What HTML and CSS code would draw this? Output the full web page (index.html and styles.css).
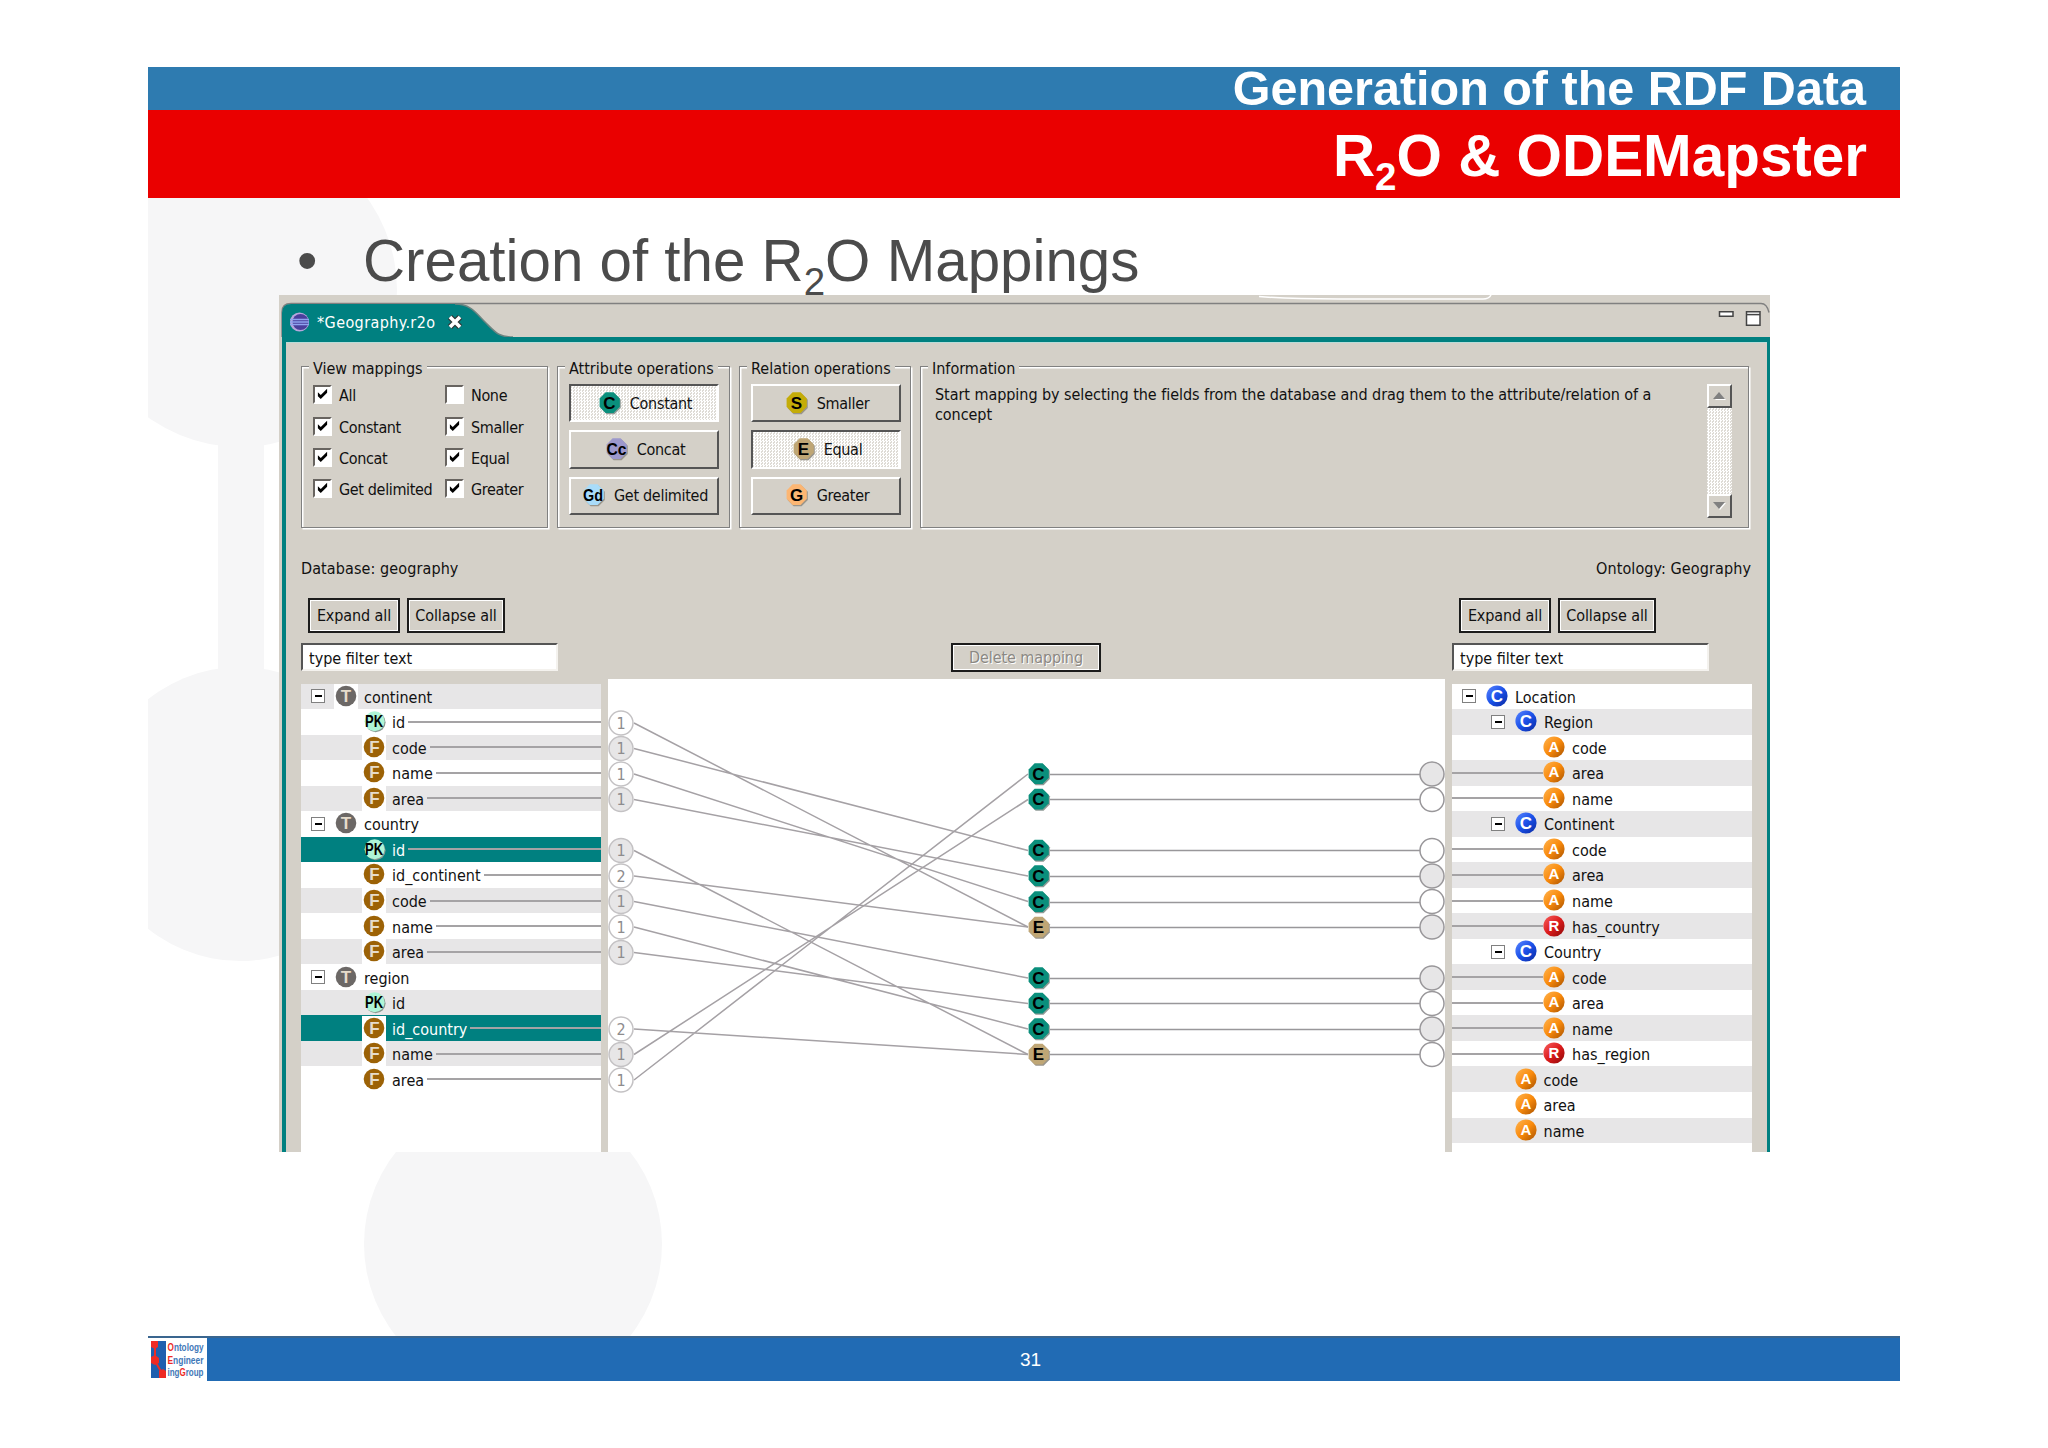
FILE: index.html
```
<!DOCTYPE html>
<html lang="en">
<head>
    <meta charset="UTF-8">
    <meta name="viewport" content="width=device-width, initial-scale=1.0">
    <title>R2O &amp; ODEMapster</title>
    <link rel="stylesheet" href="styles.css">
</head>
<body>
    <!-- icon definitions -->
    <svg class="defs" width="0" height="0">
        <defs>
            <linearGradient id="gBlue" x1="0" y1="0" x2="1" y2="1"><stop offset="0" stop-color="#5b86ff"/><stop offset=".5" stop-color="#1a50e8"/><stop offset="1" stop-color="#0a2aa0"/></linearGradient>
            <linearGradient id="gOrange" x1="0" y1="0" x2="1" y2="1"><stop offset="0" stop-color="#ffb450"/><stop offset=".5" stop-color="#f98a0c"/><stop offset="1" stop-color="#a85200"/></linearGradient>
            <linearGradient id="gRed" x1="0" y1="0" x2="1" y2="1"><stop offset="0" stop-color="#f86060"/><stop offset=".5" stop-color="#dc1c1c"/><stop offset="1" stop-color="#8c0808"/></linearGradient>
            <symbol id="table" viewBox="0 0 24 25"><circle cx="12" cy="12" r="10.3" fill="#6c6866"/><text class="glyph light" x="12" y="18">T</text></symbol>
            <symbol id="field" viewBox="0 0 24 25"><circle cx="12" cy="12" r="10.3" fill="#9c6206"/><text class="glyph light" x="12.5" y="18">F</text></symbol>
            <symbol id="pk" viewBox="0 0 24 25"><circle cx="13.6" cy="13.3" r="10" fill="#8a9a92"/><circle cx="12.6" cy="12.3" r="10" fill="#aff5d6"/><text class="glyph pk" x="12" y="18" textLength="18" lengthAdjust="spacingAndGlyphs">PK</text></symbol>
            <symbol id="concept" viewBox="0 0 24 25"><circle cx="12" cy="12" r="10.6" fill="url(#gBlue)"/><text class="glyph white" x="12" y="18">C</text></symbol>
            <symbol id="attr" viewBox="0 0 24 25"><circle cx="12" cy="12" r="10.6" fill="url(#gOrange)"/><text class="glyph white small" x="12" y="17">A</text></symbol>
            <symbol id="rel" viewBox="0 0 24 25"><circle cx="12" cy="12" r="10.6" fill="url(#gRed)"/><text class="glyph white small" x="12" y="17">R</text></symbol>
            <path id="oct" d="M7.6 1.2h8l6.2 6.2v8.4l-6.2 6.2h-8L1.6 15.8V7.4z"/>
            <symbol id="opC" viewBox="0 0 24 25"><use href="#oct" x="1" y="1.3" fill="#8f9a96"/><use href="#oct" fill="#0a8f7c"/><text class="glyph" x="11.5" y="17.5">C</text></symbol>
            <symbol id="opE" viewBox="0 0 24 25"><use href="#oct" x="1" y="1.3" fill="#99958c"/><use href="#oct" fill="#bfa675"/><text class="glyph" x="11.5" y="17.5">E</text></symbol>
            <symbol id="opS" viewBox="0 0 24 25"><use href="#oct" x="1" y="1.3" fill="#99958c"/><use href="#oct" fill="#c4ac08"/><text class="glyph" x="11.5" y="17.5">S</text></symbol>
            <symbol id="opG" viewBox="0 0 24 25"><use href="#oct" x="1" y="1.3" fill="#99958c"/><use href="#oct" fill="#fcb673"/><text class="glyph" x="11.5" y="17.5">G</text></symbol>
            <symbol id="opCc" viewBox="0 0 24 25"><use href="#oct" x="1" y="1.3" fill="#99958c"/><use href="#oct" fill="#9c98cc"/><text class="glyph" x="11.5" y="17.5" textLength="20" lengthAdjust="spacingAndGlyphs">Cc</text></symbol>
            <symbol id="opGd" viewBox="0 0 24 25"><use href="#oct" x="1" y="1.3" fill="#99958c"/><use href="#oct" fill="#a9dcfa"/><text class="glyph" x="11" y="17.5" textLength="20" lengthAdjust="spacingAndGlyphs">Gd</text></symbol>
            <symbol id="check" viewBox="0 0 13 13"><path d="M2.500 4.500v3.500l2.500 2.500 5.500-5.500V1.500L5 7z" fill="#000"/></symbol>
        </defs>
    </svg>

    <div class="slide">
        <svg class="backdrop" width="1752" height="1138" viewBox="0 0 1752 1138">
            <g fill="#f6f6f7">
                <circle cx="92" cy="92" r="157"/>
                <rect x="70" y="245" width="46" height="235"/>
                <circle cx="92" cy="616" r="147"/>
                <circle cx="365" cy="1046" r="149"/>
            </g>
        </svg>

        <header class="topbar"><h2>Generation of the RDF Data</h2></header>
        <header class="titlebar"><h1>R<span class="sub">2</span>O &amp; ODEMapster</h1></header>
        <div class="bullet"><span class="dot">•</span><p>Creation of the R<span class="sub">2</span>O Mappings</p></div>

        <main class="window">
            <div class="tabbar">
                <svg class="tabshape" width="1491" height="42" viewBox="0 0 1491 42">
                    <path d="M980 1.500Q1010 4 1060 4H1204q6 0 8-4" fill="none" stroke="#fff" stroke-width="1.5"/>
                    <path d="M3 42V17Q3 8.500 12 8.500H1482q6 0 8 9" fill="none" stroke="#808080" stroke-width="1.4"/>
                    <path d="M3 42V18Q3 9 12 9H176C192 9 197 18 207 28S220 42 234 42z" fill="#008080"/>
                    <path d="M176 9C192 9 197 18 207 28S220 42 234 42" fill="none" stroke="#6c8480" stroke-width="1.5"/>
                </svg>
                <div class="tab">
                    <svg width="21" height="20" viewBox="0 0 21 20"><circle cx="10.5" cy="10" r="9.5" fill="#b7a6de"/><circle cx="11.5" cy="10" r="8" fill="#4a3f9c"/><path d="M1 7.500h19M1 10h19M1 12.500h19" stroke="#8fa4f0" stroke-width="1.3"/></svg>
                    <span class="tabname">*Geography.r2o</span>
                    <svg width="16" height="18" viewBox="0 0 16 18"><path d="M3 4l10 10M13 4L3 14" stroke="#333" stroke-width="6"/><path d="M3 4l10 10M13 4L3 14" stroke="#fff" stroke-width="3.6"/></svg>
                </div>
                <svg class="winbtns" width="44" height="18" viewBox="0 0 44 18"><g fill="#fff" stroke="#444" stroke-width="1.5"><path d="M1.500 1.800h13.500v4.400H1.500zM28.500 1.800h13.500v13.400H28.500z"/><path d="M28.500 4.600h13.500"/></g></svg>
            </div>

            <div class="editor">
                <div class="groups">
                    <section class="group view">
                        <div class="group-title">View mappings</div>
                        <div class="checks">
                            <label><i class="box"><svg><use href="#check"/></svg></i><span>All</span></label>
                            <label><i class="box"></i><span>None</span></label>
                            <label><i class="box"><svg><use href="#check"/></svg></i><span>Constant</span></label>
                            <label><i class="box"><svg><use href="#check"/></svg></i><span>Smaller</span></label>
                            <label><i class="box"><svg><use href="#check"/></svg></i><span>Concat</span></label>
                            <label><i class="box"><svg><use href="#check"/></svg></i><span>Equal</span></label>
                            <label><i class="box"><svg><use href="#check"/></svg></i><span>Get delimited</span></label>
                            <label><i class="box"><svg><use href="#check"/></svg></i><span>Greater</span></label>
                        </div>
                    </section>
                    <section class="group attribute">
                        <div class="group-title">Attribute operations</div>
                        <div class="ops">
                            <button class="op pressed"><svg class="icon"><use href="#opC"/></svg>Constant</button>
                            <button class="op"><svg class="icon"><use href="#opCc"/></svg>Concat</button>
                            <button class="op"><svg class="icon"><use href="#opGd"/></svg>Get delimited</button>
                        </div>
                    </section>
                    <section class="group relation">
                        <div class="group-title">Relation operations</div>
                        <div class="ops">
                            <button class="op"><svg class="icon"><use href="#opS"/></svg>Smaller</button>
                            <button class="op pressed"><svg class="icon"><use href="#opE"/></svg>Equal</button>
                            <button class="op"><svg class="icon"><use href="#opG"/></svg>Greater</button>
                        </div>
                    </section>
                    <section class="group info">
                        <div class="group-title">Information</div>
                        <div class="info-body">
                            <p>Start mapping by selecting the fields from the database and drag them to the attribute/relation of a<br>concept</p>
                            <div class="scrollbar">
                                <span class="arrow"><svg width="13" height="8" viewBox="0 0 13 8"><path d="M2 8h11L7.500 2z" fill="#fff"/><path d="M0 7h12L6 0z" fill="#808080"/></svg></span>
                                <span class="arrow"><svg width="13" height="8" viewBox="0 0 13 8"><path d="M1 1h12L7 8z" fill="#fff"/><path d="M0 0h12L6 7z" fill="#808080"/></svg></span>
                            </div>
                        </div>
                    </section>
                </div>

                <div class="sources"><span>Database: geography</span><span>Ontology: Geography</span></div>

                <div class="panes">
                    <div class="pane">
                        <div class="tools"><button class="flat expand">Expand all</button><button class="flat collapse">Collapse all</button></div>
                        <input class="filter" type="text" value="type filter text">
                        <ul class="tree db">
                            <li><i class="toggle"></i><svg class="icon pad"><use href="#table"/></svg><span>continent</span></li>
                            <li class="child"><svg class="icon"><use href="#pk"/></svg><span>id</span><i class="wire"></i></li>
                            <li class="child"><svg class="icon pad"><use href="#field"/></svg><span>code</span><i class="wire"></i></li>
                            <li class="child"><svg class="icon pad"><use href="#field"/></svg><span>name</span><i class="wire"></i></li>
                            <li class="child"><svg class="icon pad"><use href="#field"/></svg><span>area</span><i class="wire"></i></li>
                            <li><i class="toggle"></i><svg class="icon pad"><use href="#table"/></svg><span>country</span></li>
                            <li class="child selected"><svg class="icon"><use href="#pk"/></svg><span>id</span><i class="wire"></i></li>
                            <li class="child"><svg class="icon pad"><use href="#field"/></svg><span>id_continent</span><i class="wire"></i></li>
                            <li class="child"><svg class="icon pad"><use href="#field"/></svg><span>code</span><i class="wire"></i></li>
                            <li class="child"><svg class="icon pad"><use href="#field"/></svg><span>name</span><i class="wire"></i></li>
                            <li class="child"><svg class="icon pad"><use href="#field"/></svg><span>area</span><i class="wire"></i></li>
                            <li><i class="toggle"></i><svg class="icon pad"><use href="#table"/></svg><span>region</span></li>
                            <li class="child"><svg class="icon"><use href="#pk"/></svg><span>id</span></li>
                            <li class="child selected"><svg class="icon pad"><use href="#field"/></svg><span>id_country</span><i class="wire"></i></li>
                            <li class="child"><svg class="icon pad"><use href="#field"/></svg><span>name</span><i class="wire"></i></li>
                            <li class="child"><svg class="icon pad"><use href="#field"/></svg><span>area</span><i class="wire"></i></li>
                        </ul>
                    </div>

                    <div class="mapping">
                        <button class="flat delete" disabled>Delete mapping</button>
                        <svg class="canvas" width="837" height="473" viewBox="0 0 837 473">
                            <!-- database fields to operations -->
                            <g class="links">
                                <path d="M26 44L420 248M26 69.500L420 171.500M26 95L420 222.500M26 120.500L420 197"/>
                                <path d="M26 171.500L420 375.500M26 197L420 248M26 222.500L420 299M26 248L420 350M26 273.500L420 324.500"/>
                                <path d="M26 350L420 375.500M26 375.500L420 120.500M26 401L420 95"/>
                            </g>
                            <!-- operations to ontology -->
                            <g class="links strong">
                                <path d="M442 95.500H812M442 120.500H812M442 171.500H812M442 197.500H812M442 223.500H812M442 248.500H812M442 299.500H812M442 324.500H812M442 350.500H812M442 375.500H812"/>
                            </g>
                            <g class="port">
                                <circle cx="13" cy="44" r="12"/><circle class="odd" cx="13" cy="69.5" r="12"/><circle cx="13" cy="95" r="12"/><circle class="odd" cx="13" cy="120.5" r="12"/>
                                <circle class="odd" cx="13" cy="171.5" r="12"/><circle cx="13" cy="197" r="12"/><circle class="odd" cx="13" cy="222.5" r="12"/><circle cx="13" cy="248" r="12"/><circle class="odd" cx="13" cy="273.5" r="12"/>
                                <circle cx="13" cy="350" r="12"/><circle class="odd" cx="13" cy="375.5" r="12"/><circle cx="13" cy="401" r="12"/>
                            </g>
                            <g class="count">
                                <text x="13" y="49.5">1</text><text x="13" y="75">1</text><text x="13" y="100.5">1</text><text x="13" y="126">1</text>
                                <text x="13" y="177">1</text><text x="13" y="202.5">2</text><text x="13" y="228">1</text><text x="13" y="253.5">1</text><text x="13" y="279">1</text>
                                <text x="13" y="355.5">2</text><text x="13" y="381">1</text><text x="13" y="406.5">1</text>
                            </g>
                            <g class="port end">
                                <circle class="odd" cx="824" cy="95" r="12"/><circle cx="824" cy="120.5" r="12"/>
                                <circle cx="824" cy="171.5" r="12"/><circle class="odd" cx="824" cy="197" r="12"/><circle cx="824" cy="222.5" r="12"/><circle class="odd" cx="824" cy="248" r="12"/>
                                <circle class="odd" cx="824" cy="299" r="12"/><circle cx="824" cy="324.5" r="12"/><circle class="odd" cx="824" cy="350" r="12"/><circle cx="824" cy="375.5" r="12"/>
                            </g>
                            <use href="#opC" x="419" y="83" width="24" height="25"/>
                            <use href="#opC" x="419" y="108.5" width="24" height="25"/>
                            <use href="#opC" x="419" y="159.5" width="24" height="25"/>
                            <use href="#opC" x="419" y="185" width="24" height="25"/>
                            <use href="#opC" x="419" y="211" width="24" height="25"/>
                            <use href="#opE" x="419" y="236.5" width="24" height="25"/>
                            <use href="#opC" x="419" y="287" width="24" height="25"/>
                            <use href="#opC" x="419" y="312.5" width="24" height="25"/>
                            <use href="#opC" x="419" y="338" width="24" height="25"/>
                            <use href="#opE" x="419" y="363.5" width="24" height="25"/>
                        </svg>
                    </div>

                    <div class="pane">
                        <div class="tools"><button class="flat expand">Expand all</button><button class="flat collapse">Collapse all</button></div>
                        <input class="filter" type="text" value="type filter text">
                        <ul class="tree onto">
                            <li><i class="toggle"></i><svg class="icon"><use href="#concept"/></svg><span>Location</span></li>
                            <li class="sub1"><i class="toggle"></i><svg class="icon"><use href="#concept"/></svg><span>Region</span></li>
                            <li class="leaf"><svg class="icon"><use href="#attr"/></svg><span>code</span></li>
                            <li class="wired"><i class="wire"></i><svg class="icon"><use href="#attr"/></svg><span>area</span></li>
                            <li class="wired"><i class="wire"></i><svg class="icon"><use href="#attr"/></svg><span>name</span></li>
                            <li class="sub1"><i class="toggle"></i><svg class="icon"><use href="#concept"/></svg><span>Continent</span></li>
                            <li class="wired"><i class="wire"></i><svg class="icon"><use href="#attr"/></svg><span>code</span></li>
                            <li class="wired"><i class="wire"></i><svg class="icon"><use href="#attr"/></svg><span>area</span></li>
                            <li class="wired"><i class="wire"></i><svg class="icon"><use href="#attr"/></svg><span>name</span></li>
                            <li class="wired"><i class="wire"></i><svg class="icon"><use href="#rel"/></svg><span>has_country</span></li>
                            <li class="sub1"><i class="toggle"></i><svg class="icon"><use href="#concept"/></svg><span>Country</span></li>
                            <li class="wired"><i class="wire"></i><svg class="icon"><use href="#attr"/></svg><span>code</span></li>
                            <li class="wired"><i class="wire"></i><svg class="icon"><use href="#attr"/></svg><span>area</span></li>
                            <li class="wired"><i class="wire"></i><svg class="icon"><use href="#attr"/></svg><span>name</span></li>
                            <li class="wired"><i class="wire"></i><svg class="icon"><use href="#rel"/></svg><span>has_region</span></li>
                            <li class="leaf1"><svg class="icon"><use href="#attr"/></svg><span>code</span></li>
                            <li class="leaf1"><svg class="icon"><use href="#attr"/></svg><span>area</span></li>
                            <li class="leaf1"><svg class="icon"><use href="#attr"/></svg><span>name</span></li>
                        </ul>
                    </div>
                </div>
            </div>
        </main>

        <footer class="footer">
            <svg class="logo" width="59" height="43" viewBox="0 0 59 43">
                <rect width="59" height="43" fill="#fff"/>
                <rect x="3" y="3" width="15" height="37" fill="#1f5fae"/>
                <path d="M7 7v16l8 14" fill="none" stroke="#ee2a24" stroke-width="2"/>
                <path d="M3 3h7v6l-3 2-4-2zM3 19l4-2 4 3v5l-4 2-4-2zM11 33l4-2 3 2v7h-7z" fill="#ee2a24"/>
                <g class="logotext">
                    <text x="19.5" y="13" textLength="36" lengthAdjust="spacingAndGlyphs"><tspan class="r">O</tspan>ntology</text>
                    <text x="19.5" y="25.5" textLength="36" lengthAdjust="spacingAndGlyphs"><tspan class="r">E</tspan>ngineer</text>
                    <text x="19.5" y="38" textLength="36" lengthAdjust="spacingAndGlyphs">ing<tspan class="r">G</tspan>roup</text>
                </g>
            </svg>
            <span class="page">31</span>
        </footer>
    </div>
</body>
</html>
```
FILE: styles.css
```
* {
  box-sizing: border-box;
}

body {
  margin: 0;
  background: #fff;
  font-family: "Liberation Sans", Arial, sans-serif;
}

h1, h2, p, ul {
  margin: 0;
  padding: 0;
}

.defs {
  position: absolute;
}

.slide {
  position: relative;
  display: flex;
  flex-direction: column;
  width: 1752px;
  height: 1314px;
  margin: 67px 0 0 148px;
}

/* pale circles behind everything */
.backdrop {
  position: absolute;
  left: 0;
  top: 131px;
  z-index: -1;
}

.topbar {
  height: 43px;
  padding-right: 34px;
  background: #2e7bb0;
  color: #fff;
  text-align: right;
}

.topbar h2 {
  font-size: 48.5px;
  line-height: 43px;
  white-space: nowrap;
}

.titlebar {
  height: 88px;
  padding-right: 33px;
  background: #ea0000;
  color: #fff;
  text-align: right;
}

.titlebar h1 {
  font-size: 58.4px;
  line-height: 92px;
  white-space: nowrap;
}

.sub {
  font-size: 66%;
  position: relative;
  top: 14px;
  line-height: 1px;
}

.bullet {
  display: flex;
  height: 97px;
  color: #4b4b4b;
  font-size: 58.3px;
  line-height: 125px;
  white-space: nowrap;
}

.dot {
  width: 66px;
  margin-left: 149px;
}

/* application window */
.window {
  display: flex;
  flex-direction: column;
  width: 1491px;
  height: 857px;
  margin-left: 131px;
  background: #d4d0c8;
  font-family: "DejaVu Sans Condensed", "DejaVu Sans", sans-serif;
  font-stretch: condensed;
  font-size: 16px;
  color: #111;
}

.tabbar {
  position: relative;
  display: flex;
  justify-content: space-between;
  height: 42px;
  padding: 15px 8px 0 10px;
}

.tabshape {
  position: absolute;
  left: 0;
  top: 0;
}

.tab {
  position: relative;
  display: flex;
  align-items: center;
  height: 24px;
  color: #fff;
}

.tabname {
  margin: 0 12px 0 7px;
  padding-top: 1px;
  letter-spacing: .4px;
}

.winbtns {
  position: relative;
}

.editor {
  display: flex;
  flex-direction: column;
  height: 815px;
  margin-left: 3px;
  padding: 24px 15px 0 15px;
  border: solid #008080;
  border-width: 5px 3px 0 4px;
  box-shadow: inset 0 1px 0 #b9dcd8;
}

.groups {
  display: flex;
  gap: 9px;
}

.group {
  display: flex;
  flex-direction: column;
  height: 162px;
  border: 1px solid #808080;
  box-shadow: 1.5px 1.5px 0 #fff, inset 1.5px 1.5px 0 #fff;
}

.view { width: 247px; }
.attribute { width: 173px; }
.relation { width: 172px; }
.info { width: 829px; }

.group-title {
  align-self: flex-start;
  margin: -8px 0 0 7px;
  padding: 0 4px;
  line-height: 20px;
  background: #d4d0c8;
  white-space: nowrap;
}

.checks {
  display: grid;
  grid-template-columns: 132px 110px;
  grid-auto-rows: 31.4px;
  margin: 0 0 0 11px;
}

.checks label {
  display: flex;
  align-items: center;
  gap: 7px;
  white-space: nowrap;
  letter-spacing: -.35px;
}

.checks span {
  padding-top: 2px;
}

.box {
  width: 19px;
  height: 19px;
  border: 2px solid;
  border-color: #686460 #fff #fff #686460;
  background: #fff;
}

.box svg {
  display: block;
  width: 15px;
  height: 15px;
}

.ops {
  display: flex;
  flex-direction: column;
  gap: 8px;
  margin: 5px 0 0 11px;
}

button, input {
  font: inherit;
  color: inherit;
  border-radius: 0;
}

.op {
  display: flex;
  align-items: center;
  justify-content: center;
  gap: 8px;
  width: 150px;
  height: 38.4px;
  padding: 0 0 0 2px;
  border: 2px solid;
  border-color: #fff #555 #555 #fff;
  background: #d4d0c8;
  white-space: nowrap;
  letter-spacing: -.3px;
}

.pressed {
  border-color: #555 #fff #fff #555;
  background: repeating-conic-gradient(#fff 0 25%, #dedbd5 0 50%) 0 0 / 3px 3px;
}

.icon {
  flex: none;
  width: 24px;
  height: 25px;
}

.glyph {
  font-family: "Liberation Sans", Arial, sans-serif;
  font-size: 17px;
  font-weight: bold;
  font-stretch: normal;
  letter-spacing: 0;
  text-anchor: middle;
}

.glyph.light { fill: #e6dccb; }
.glyph.white { fill: #fff; }
.glyph.small { font-size: 15px; }

.info-body {
  display: flex;
  justify-content: space-between;
  padding: 5px 16px 0 14px;
}

.info-body p {
  padding-top: 1px;
  line-height: 19.5px;
  letter-spacing: -.05px;
  white-space: nowrap;
}

.scrollbar {
  display: flex;
  flex-direction: column;
  justify-content: space-between;
  width: 25px;
  height: 134px;
  background: repeating-conic-gradient(#fff 0 25%, #dedbd5 0 50%) 0 0 / 3px 3px;
}

.arrow {
  display: flex;
  align-items: center;
  justify-content: center;
  height: 24px;
  border: 2px solid;
  border-color: #fff #555 #555 #fff;
  background: #d4d0c8;
}

.sources {
  display: flex;
  justify-content: space-between;
  margin: 26px 0 14px;
  padding: 0 1px 0 0;
  line-height: 30px;
  letter-spacing: .1px;
}

.panes {
  display: grid;
  grid-template-columns: 300px 837px 300px;
  column-gap: 7px;
  flex: 1;
}

.pane {
  display: flex;
  flex-direction: column;
}

.tools {
  display: flex;
  gap: 7px;
  padding-left: 7px;
}

.flat {
  height: 35px;
  padding: 0;
  border: 2px solid #1c1c1c;
  background: #d4d0c8;
  box-shadow: inset 1px 1px 0 #fff, inset -1px -1px 0 #fff;
  white-space: nowrap;
  letter-spacing: -.1px;
}

.expand { width: 92px; }
.collapse { width: 98px; }

.filter {
  width: 257px;
  height: 28px;
  margin: 10px 0 12.5px;
  padding: 2px 0 0 6px;
  border: 2px solid;
  border-color: #555 #f4f2ee #f4f2ee #555;
  background: #fff;
}

.tree {
  flex: 1;
  list-style: none;
  background: #fff;
}

.tree li {
  display: flex;
  align-items: center;
  height: 25.54px;
}

.tree span {
  margin-left: 6px;
  line-height: 23px;
  padding-top: 2px;
}

.db li { padding-left: 10px; }
.db .child { padding-left: 61px; }
.db li:nth-child(odd),
.onto li:nth-child(even) {
  background: #e7e6e7;
}

.tree .selected {
  background: #008080 !important;
  color: #fff;
}

.pad { background: #fff; }

.toggle {
  flex: none;
  width: 14px;
  height: 14px;
  margin-right: 9px;
  border: 1.5px solid #808080;
  background: linear-gradient(#000, #000) center / 7px 2px no-repeat #fff;
}

.onto li { padding-left: 10px; }
.onto .sub1 { padding-left: 39px; }
.onto .leaf { padding-left: 90px; }
.onto .leaf1 { padding-left: 61.5px; }
.onto .wired { padding-left: 0; }

.wire {
  flex: 1;
  height: 2px;
  margin-left: 3px;
  background: #a5a3a5;
}

.onto .wire {
  flex: none;
  width: 91px;
  margin: 0 -1px 0 0;
}

.mapping {
  display: flex;
  flex-direction: column;
}

.delete {
  width: 150px;
  height: 29px;
  margin: 45px 0 7px 343px;
  color: #8b8883;
  text-shadow: 1px 1px 0 #fff;
}

.canvas {
  display: block;
  background: #fff;
}

.links {
  fill: none;
  stroke: #a5a1a5;
  stroke-width: 1.5;
}

.strong { stroke: #99979a; }

.port circle {
  fill: #fff;
  stroke: #c4c2c4;
  stroke-width: 1.5;
}

.port .odd { fill: #e7e6e7; }
.end circle { stroke: #99979a; }

.count {
  font-family: "DejaVu Sans Condensed", "DejaVu Sans", sans-serif;
  font-size: 16px;
  fill: #8e8c8e;
  text-anchor: middle;
}

.footer {
  display: flex;
  height: 45px;
  margin-top: auto;
  border-top: 2px solid #3a668f;
  background: #216bb4;
  color: #fff;
}

.logo {
  overflow: visible;
}

.logotext {
  font-family: "Liberation Sans Narrow", "Liberation Sans", sans-serif;
  font-size: 10.5px;
  font-weight: bold;
  fill: #3f78b8;
}

.r { fill: #ee2a24; }

.page {
  margin-left: 813px;
  font-size: 19px;
  line-height: 43px;
}
```
